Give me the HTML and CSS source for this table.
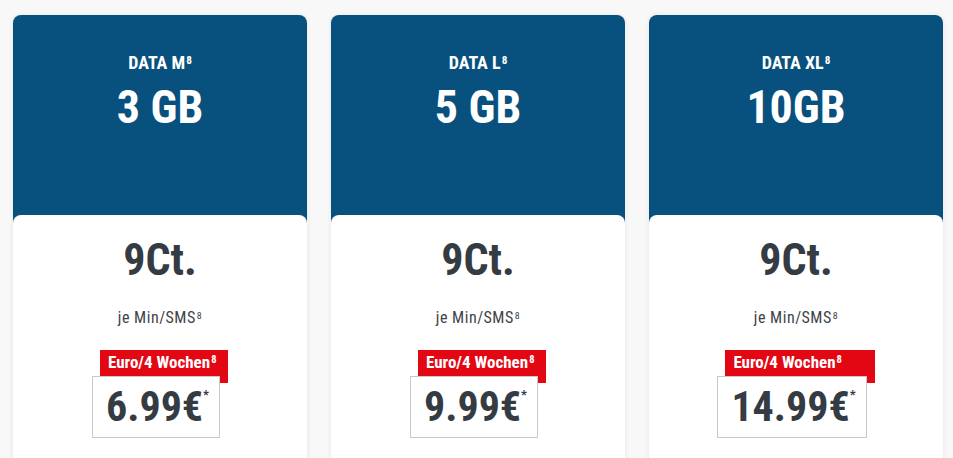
FILE: index.html
```html
<!DOCTYPE html>
<html lang="de">
<head>
    <meta charset="UTF-8">
    <title>Datentarife</title>
    <link rel="stylesheet" href="styles.css">
</head>
<body>

<div class="tariff-list">
    <div class="tariff">
        <div class="tariff-head">
            <div class="tariff-name">DATA M<sup>8</sup></div>
            <div class="tariff-volume">3 GB</div>
        </div>
        <div class="tariff-body">
            <div class="minute-price">9Ct.</div>
            <div class="minute-note">je Min/SMS<sup>8</sup></div>
            <div class="price-wrap">
                <div class="price-badge">Euro/4 Wochen<sup>8</sup></div>
                <div class="price-box">6.99€<sup>*</sup></div>
            </div>
        </div>
    </div>

    <div class="tariff">
        <div class="tariff-head">
            <div class="tariff-name">DATA L<sup>8</sup></div>
            <div class="tariff-volume">5 GB</div>
        </div>
        <div class="tariff-body">
            <div class="minute-price">9Ct.</div>
            <div class="minute-note">je Min/SMS<sup>8</sup></div>
            <div class="price-wrap">
                <div class="price-badge">Euro/4 Wochen<sup>8</sup></div>
                <div class="price-box">9.99€<sup>*</sup></div>
            </div>
        </div>
    </div>

    <div class="tariff">
        <div class="tariff-head">
            <div class="tariff-name">DATA XL<sup>8</sup></div>
            <div class="tariff-volume">10GB</div>
        </div>
        <div class="tariff-body">
            <div class="minute-price">9Ct.</div>
            <div class="minute-note">je Min/SMS<sup>8</sup></div>
            <div class="price-wrap">
                <div class="price-badge">Euro/4 Wochen<sup>8</sup></div>
                <div class="price-box">14.99€<sup>*</sup></div>
            </div>
        </div>
    </div>
</div>

</body>
</html>
```

FILE: styles.css
```css
html {
    overflow: hidden;
}

body {
    margin: 0;
    background-color: #f8f8f8;
    font-family: "Roboto Condensed", "Open Sans", "Liberation Sans", sans-serif;
    font-stretch: condensed;
    color: #353b43;
}

sup {
    font-size: 0.62em;
    line-height: 0;
    vertical-align: 0.45em;
    margin-left: 1px;
}

.tariff-list {
    display: flex;
    gap: 24px;
    padding: 15px 10px 0 13px;
}

.tariff {
    width: 294px;
    flex-shrink: 0;
    background-color: #08507d;
    border-radius: 8px 8px 0 0;
    box-shadow: 0 0 5px rgba(0, 0, 0, 0.08);
}

.tariff-head {
    height: 200px;
    box-sizing: border-box;
    padding-top: 36px;
    text-align: center;
    color: #fff;
    font-weight: bold;
}

.tariff-name {
    font-size: 18px;
    line-height: 24px;
}

.tariff-volume {
    font-size: 46px;
    line-height: 50px;
    margin-top: 7px;
}

.tariff-body {
    height: 243px;
    background-color: #fff;
    border-radius: 8px 8px 0 0;
    padding-top: 20px;
    text-align: center;
}

.minute-price {
    font-size: 44px;
    line-height: 50px;
    font-weight: bold;
}

.minute-note {
    margin-top: 23px;
    font-size: 16px;
    line-height: 20px;
    letter-spacing: 0.5px;
    color: #3d434a;
}

.price-wrap {
    display: inline-grid;
    margin-top: 22px;
    text-align: left;
}

.price-badge {
    margin-left: 8px;
    padding: 0 8px 9px 8px;
    background-color: #e30613;
    color: #fff;
    font-size: 17px;
    line-height: 24px;
    font-weight: bold;
    white-space: nowrap;
}

.price-box {
    margin-top: -7px;
    margin-right: 8px;
    height: 60px;
    padding: 0 10px 0 13px;
    border: 1px solid #c8c8c8;
    background-color: #fff;
    font-size: 42px;
    line-height: 60px;
    font-weight: bold;
    white-space: nowrap;
}

.price-box sup {
    font-size: 13px;
    vertical-align: 22px;
    margin-left: 0;
}
```
